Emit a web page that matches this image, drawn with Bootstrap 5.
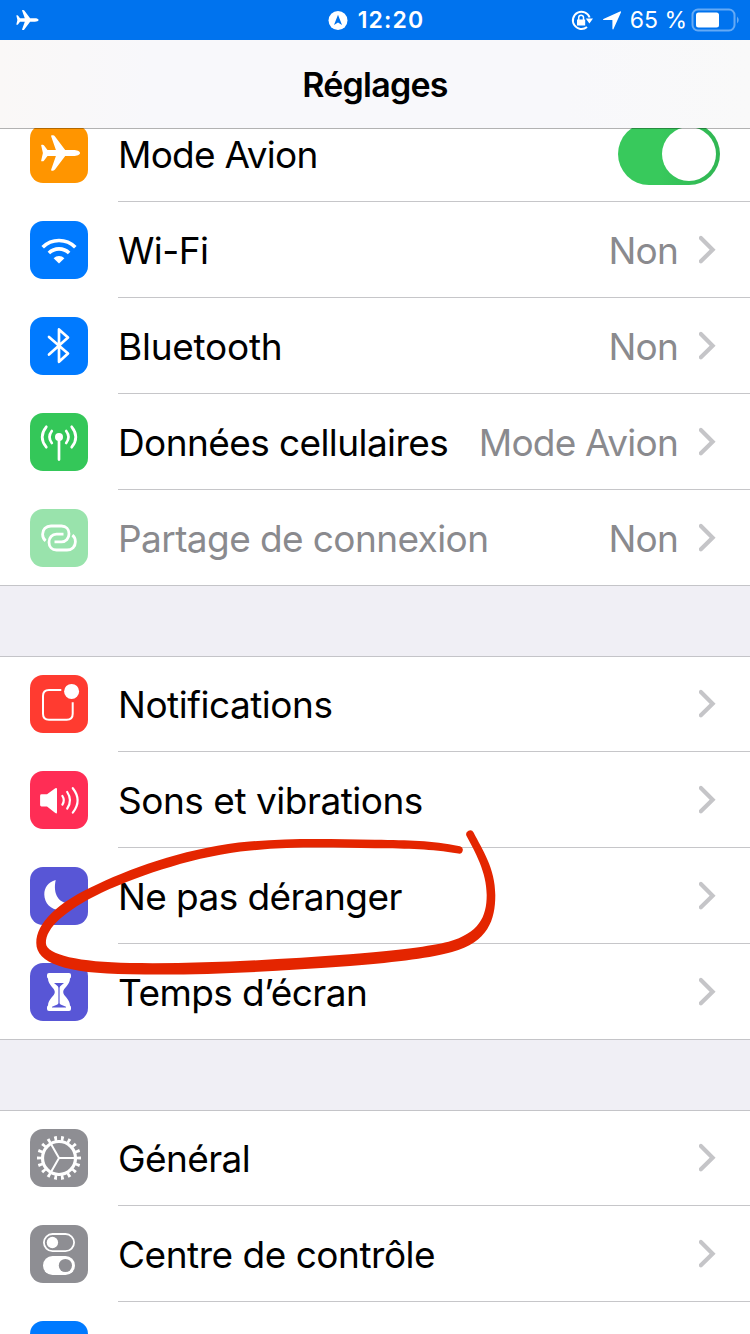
<!DOCTYPE html>
<html lang="fr">
<head>
<meta charset="utf-8">
<meta name="viewport" content="width=device-width, initial-scale=1">
<title>Réglages</title>
<link href="https://cdn.jsdelivr.net/npm/bootstrap@5.3.0/dist/css/bootstrap.min.css" rel="stylesheet">
<style>
  body { font-family: Inter, "Liberation Sans", sans-serif; background: #f0eff5; color: #000; }
  .phone { width: 750px; height: 1334px; }
  .topbar { z-index: 2; height: 129px; border-bottom: 1px solid rgba(0,0,0,.3); background-clip: padding-box; }
  .status { height: 40px; background: #0073ee; color: #fff; font-size: 23px; line-height: 40px; }
  .status-start { padding-left: 12px; }
  .status-end { padding-right: 10px; }
  .titlebar { height: 88px; background: linear-gradient(90deg, #faf8f7, #f8f8fb 20%, #f8f8fb 75%, #f9f9f9); font-size: 34px; font-weight: 600; letter-spacing: -.75px; }
  .clock { font-weight: 600; letter-spacing: 1.1px; }
  .clock-wrap { gap: 10px; }
  .settings { margin-top: -23px; }
  .group { margin-bottom: 70px; background: #fff; border-bottom: 1px solid #c4c4c8; }
  .group + .group { border-top: 1px solid #c4c4c8; }
  .entry { height: 96px; padding-left: 30px; }
  .group .entry:last-child { height: 95px; }
  .group + .group .entry:first-child { height: 96px; margin-top: -1px; }
  .entry-body { margin-left: 30px; padding-right: 33px; border-bottom: 1px solid #c6c6c9; font-size: 37px; line-height: 1; white-space: nowrap; }
  .entry:last-child .entry-body { border-bottom: 0; }
  .label, .value { padding-top: 2px; }
  .label { letter-spacing: -.59px; }
  .label-loose { letter-spacing: -.25px; }
  .label-mid { letter-spacing: -.48px; }
  .label-tight { letter-spacing: -.75px; }
  .label-off { color: #8a8a8e; }
  .value { color: #8a8a8e; letter-spacing: -.78px; margin-right: 21px; }
  .tile { width: 58px; height: 58px; border-radius: 13px; }
  .tile svg { display: block; width: 58px; height: 58px; }
  .orange { background: #ff9500; } .azure { background: #007aff; } .leaf { background: #34c759; }
  .leaf-off { background: #99e3ac; } .vermilion { background: #ff3b30; } .rose { background: #ff2d55; }
  .indigo-tile { background: #5856d6; } .steel { background: #8e8e93; }
  .toggle { width: 102px; height: 62px; padding: 4px; margin-right: -3px; background: linear-gradient(90deg, #38c95c 40%, #30b653); }
  .knob { width: 54px; height: 54px; }
  .ink { z-index: 3; pointer-events: none; }
</style>
</head>
<body>
<svg class="d-none">
  <symbol id="plane" viewBox="0 0 58 58"><path fill="#fff" d="M50 28c0 1.800-3.200 3-6.500 3h-8.300L25 44.600q-.8 1.100-2 1.100h-1.100q-1.100 0-.7-1.300L25.900 31h-8.400l-3.600 4.700q-.5.600-1.200.600h-.9q-.8 0-.6-.9L12.900 28l-1.700-7.400q-.2-.9.600-.9h.9q.7 0 1.200.6L17.500 25h8.400l-4.700-13.400q-.4-1.300.7-1.300h1.100q1.200 0 2 1.100L35.200 25h8.300c3.300 0 6.500 1.200 6.500 3z"/></symbol>
  <symbol id="chev" viewBox="0 0 18 30"><path d="M1.900 3.100 13.600 14.700 1.900 26.300" fill="none" stroke="#c5c5c8" stroke-width="4.200" stroke-linecap="round" stroke-linejoin="miter"/></symbol>
</svg>

<div class="phone position-relative overflow-hidden">
  <header class="topbar position-relative">
    <div class="status d-flex align-items-center">
      <div class="status-start col d-flex align-items-center"><svg width="28" height="32" viewBox="5 0 46 56"><use href="#plane" width="58" height="58"/></svg></div>
      <div class="clock-wrap col-auto d-flex align-items-center">
        <svg width="20" height="20" viewBox="0 0 20 20"><circle cx="10" cy="10.500" r="9.500" fill="#fff"/><path fill="#0073ee" d="M10 4.800 14 15l-4-2.600L6 15z"/></svg>
        <span class="clock">12:20</span>
      </div>
      <div class="status-end col d-flex align-items-center justify-content-end">
        <svg width="24" height="24" viewBox="0 0 24 24" class="me-2"><path d="M19.600 9.500A8.600 8.600 0 1 0 17 19" fill="none" stroke="#fff" stroke-width="2"/><path fill="#fff" d="M15.800 10.400H23l-3.600 5zM7 11.500h8.200v6H7z"/><path d="M8.700 12V9.600a2.400 2.400 0 0 1 4.800 0V12" fill="none" stroke="#fff" stroke-width="1.500"/></svg>
        <svg width="20" height="20" viewBox="0 0 20 20" class="me-2"><path fill="#fff" d="M1.400 8.900 18 1.500q1.400-.5.900.9L11.500 19q-.7 1.200-1.100-.2V10H1.700q-1.400-.3-.3-1.100z"/></svg>
        <span>65 %</span>
        <svg width="49" height="24" viewBox="0 0 49 24" class="ms-1"><rect x="1.500" y="1.500" width="42" height="21" rx="5.500" fill="none" stroke="#65aaf5" stroke-width="2"/><rect x="5" y="4.500" width="23" height="15" rx="2.500" fill="#fff"/><path d="M46 8.500q3.500 3.500 0 7z" fill="#65aaf5"/></svg>
      </div>
    </div>
    <div class="titlebar d-flex align-items-center justify-content-center">Réglages</div>
  </header>

  <main class="settings">
    <section class="group">
      <div class="entry d-flex align-items-center">
        <div class="tile orange flex-shrink-0"><svg viewBox="0 0 58 58"><use href="#plane" width="58" height="58"/></svg></div>
        <div class="entry-body d-flex align-items-center flex-grow-1 h-100"><span class="label label-tight me-auto">Mode Avion</span><div class="toggle rounded-pill d-flex justify-content-end"><div class="knob rounded-circle bg-white"></div></div></div>
      </div>
      <div class="entry d-flex align-items-center">
        <div class="tile azure flex-shrink-0"><svg viewBox="0 0 58 58" fill="none" stroke="#fff" stroke-width="3.600"><path d="M12.700 26.200a23 23 0 0 1 32.600 0M18.900 32a14.400 14.400 0 0 1 20.200 0"/><path d="M29 42.600 23.600 37.200a7.700 7.700 0 0 1 10.800 0z" fill="#fff" stroke="none"/></svg></div>
        <div class="entry-body d-flex align-items-center flex-grow-1 h-100"><span class="label me-auto">Wi-Fi</span><span class="value">Non</span><svg width="18" height="30"><use href="#chev"/></svg></div>
      </div>
      <div class="entry d-flex align-items-center">
        <div class="tile azure flex-shrink-0"><svg viewBox="0 0 58 58" fill="none" stroke="#fff" stroke-width="2.700" stroke-linecap="round" stroke-linejoin="round"><path d="M19 20 38 36.400l-9 8.400V12.400l9 8.200-19 17"/></svg></div>
        <div class="entry-body d-flex align-items-center flex-grow-1 h-100"><span class="label label-loose me-auto">Bluetooth</span><span class="value">Non</span><svg width="18" height="30"><use href="#chev"/></svg></div>
      </div>
      <div class="entry d-flex align-items-center">
        <div class="tile leaf flex-shrink-0"><svg viewBox="0 0 58 58" fill="none" stroke="#fff" stroke-width="2.700" stroke-linecap="round"><circle cx="29" cy="24" r="4" fill="#fff" stroke="none"/><path d="M29 24v22.600M21.800 18q-4.600 6 0 12M36.200 18q4.600 6 0 12M16.300 13.800q-8.200 10.200 0 20.400M41.700 13.800q8.200 10.200 0 20.400"/></svg></div>
        <div class="entry-body d-flex align-items-center flex-grow-1 h-100"><span class="label me-auto">Données cellulaires</span><span class="value">Mode Avion</span><svg width="18" height="30"><use href="#chev"/></svg></div>
      </div>
      <div class="entry d-flex align-items-center">
        <div class="tile leaf-off flex-shrink-0"><svg viewBox="0 0 58 58" fill="none" stroke="#fff" stroke-width="2.800"><path id="lnk" d="M15.600 31.800c-2.200-1.800-3-4.300-3-6.600 0-4.700 3.400-8.200 8.400-8.200h10.500c4.500 0 7.500 3.300 7.500 7.800s-3 8-7.500 8H24.500"/><use href="#lnk" transform="rotate(180 29 29)"/></svg></div>
        <div class="entry-body d-flex align-items-center flex-grow-1 h-100"><span class="label label-off me-auto">Partage de connexion</span><span class="value">Non</span><svg width="18" height="30"><use href="#chev"/></svg></div>
      </div>
    </section>

    <section class="group">
      <div class="entry d-flex align-items-center">
        <div class="tile vermilion flex-shrink-0"><svg viewBox="0 0 58 58"><path d="M31.300 15H19q-6 0-6 6v17.700q0 6 6 6h17.700q6 0 6-6V27.300" fill="none" stroke="#fff" stroke-width="2"/><circle cx="41.600" cy="16.400" r="7.500" fill="#fff"/></svg></div>
        <div class="entry-body d-flex align-items-center flex-grow-1 h-100"><span class="label label-mid me-auto">Notifications</span><svg width="18" height="30"><use href="#chev"/></svg></div>
      </div>
      <div class="entry d-flex align-items-center">
        <div class="tile rose flex-shrink-0"><svg viewBox="0 0 58 58" fill="none" stroke="#fff" stroke-width="2.200" stroke-linecap="round"><path fill="#fff" stroke="none" d="M11.500 23.300H17l8.300-6q1.700-.9 1.700.9v23q0 1.900-1.700.9L17 35.400h-5.500q-1.400 0-1.400-1.400v-9.300q0-1.400 1.400-1.400z"/><path d="M32.400 25q2.800 4.300 0 8.600M37.200 21q5.600 8.300 0 16.600M42.800 17.200q9.600 12.200 0 24.400"/></svg></div>
        <div class="entry-body d-flex align-items-center flex-grow-1 h-100"><span class="label label-mid me-auto">Sons et vibrations</span><svg width="18" height="30"><use href="#chev"/></svg></div>
      </div>
      <div class="entry d-flex align-items-center">
        <div class="tile indigo-tile flex-shrink-0"><svg viewBox="0 0 58 58"><path fill="#fff" d="M25.700 13C18 15 14.300 21 14.300 27.500 14.300 36 21 43 29.500 43c6 0 10.500-2.500 13-7.500C32 38.500 22 30 25.700 13z"/></svg></div>
        <div class="entry-body d-flex align-items-center flex-grow-1 h-100"><span class="label me-auto">Ne pas déranger</span><svg width="18" height="30"><use href="#chev"/></svg></div>
      </div>
      <div class="entry d-flex align-items-center">
        <div class="tile indigo-tile flex-shrink-0"><svg viewBox="0 0 58 58"><path fill="#fff" d="M19 10h20q2 0 2 2v1.500q0 1.600-1 2C40 22 33.200 25 33.200 29S40 36 40 42.500q1 .4 1 2V46q0 2-2 2H19q-2 0-2-2v-1.500q0-1.600 1-2C18 36 24.800 33 24.800 29S18 22 18 15.500q-1-.4-1-2V12q0-2 2-2z"/><path fill="#5856d6" d="M24 20h10l-3.800 3.300q-.6.800-.6 2V40q0 1 1 1.400l5.400 2.400v.8H22v-.8l5.400-2.400q1-.4 1-1.400V25.300q0-1.200-.6-2z"/></svg></div>
        <div class="entry-body d-flex align-items-center flex-grow-1 h-100"><span class="label me-auto">Temps d’écran</span><svg width="18" height="30"><use href="#chev"/></svg></div>
      </div>
    </section>

    <section class="group">
      <div class="entry d-flex align-items-center">
        <div class="tile steel flex-shrink-0"><svg viewBox="0 0 58 58" fill="none" stroke="#fff"><circle cx="29" cy="29" r="16.500" stroke-width="3.200"/><circle cx="29" cy="29" r="19.700" stroke-width="4.600" pathLength="180" stroke-dasharray="4 6" stroke-dashoffset="2"/><path stroke-width="2" d="M29 29h16M29 29l-8-13.900M29 29l-8 13.900"/></svg></div>
        <div class="entry-body d-flex align-items-center flex-grow-1 h-100"><span class="label me-auto">Général</span><svg width="18" height="30"><use href="#chev"/></svg></div>
      </div>
      <div class="entry d-flex align-items-center">
        <div class="tile steel flex-shrink-0"><svg viewBox="0 0 58 58"><rect x="13.900" y="9" width="30.200" height="17.200" rx="8.600" fill="none" stroke="#fff" stroke-width="1.800"/><circle cx="22.400" cy="17.500" r="5.700" fill="#fff"/><rect x="13" y="31" width="32" height="19" rx="9.500" fill="#fff"/><circle cx="35.400" cy="40.500" r="6.600" fill="#8e8e93"/></svg></div>
        <div class="entry-body d-flex align-items-center flex-grow-1 h-100"><span class="label label-mid me-auto">Centre de contrôle</span><svg width="18" height="30"><use href="#chev"/></svg></div>
      </div>
      <div class="entry d-flex align-items-center">
        <div class="tile azure flex-shrink-0"></div>
        <div class="entry-body flex-grow-1 h-100"></div>
      </div>
    </section>
  </main>

  <!-- hand-drawn ring around "Ne pas déranger" -->
  <svg class="ink position-absolute top-0 start-0" width="750" height="1334" viewBox="0 0 750 1334">
    <path fill="#e42500" d="M460 846.200C430 840.500 410 840.300 375 839.800C330 838.800 290 837.800 249.500 841.600C192 846.500 137 866 98 884C57 902.500 36.300 923 36.300 943C36.300 963 65 973.500 130 974.300C200 975.800 270 971.800 350 966C400 962 432 957.500 452 952C488 942 495.300 920 495.300 895C495.300 868 482 849 473.600 832.400A4 4 0 0 0 466.400 835.800C475 852 486.700 872 486.700 895C486.700 917 479 933 448.500 941.800C430 946.500 400 950 350 954.300C270 960.200 200 964 130 963C80 962 45.900 955 45.900 943C45.900 928 64 911 102 892.500C142 874.500 197 855.500 250.500 850.500C290 846.500 330 847.500 375 848.200C410 848.700 430 848.700 458.300 853.600A3.800 3.800 0 0 0 460 846.200z"/>
  </svg>
</div>
<script src="https://cdn.jsdelivr.net/npm/bootstrap@5.3.0/dist/js/bootstrap.bundle.min.js"></script>
</body>
</html>
